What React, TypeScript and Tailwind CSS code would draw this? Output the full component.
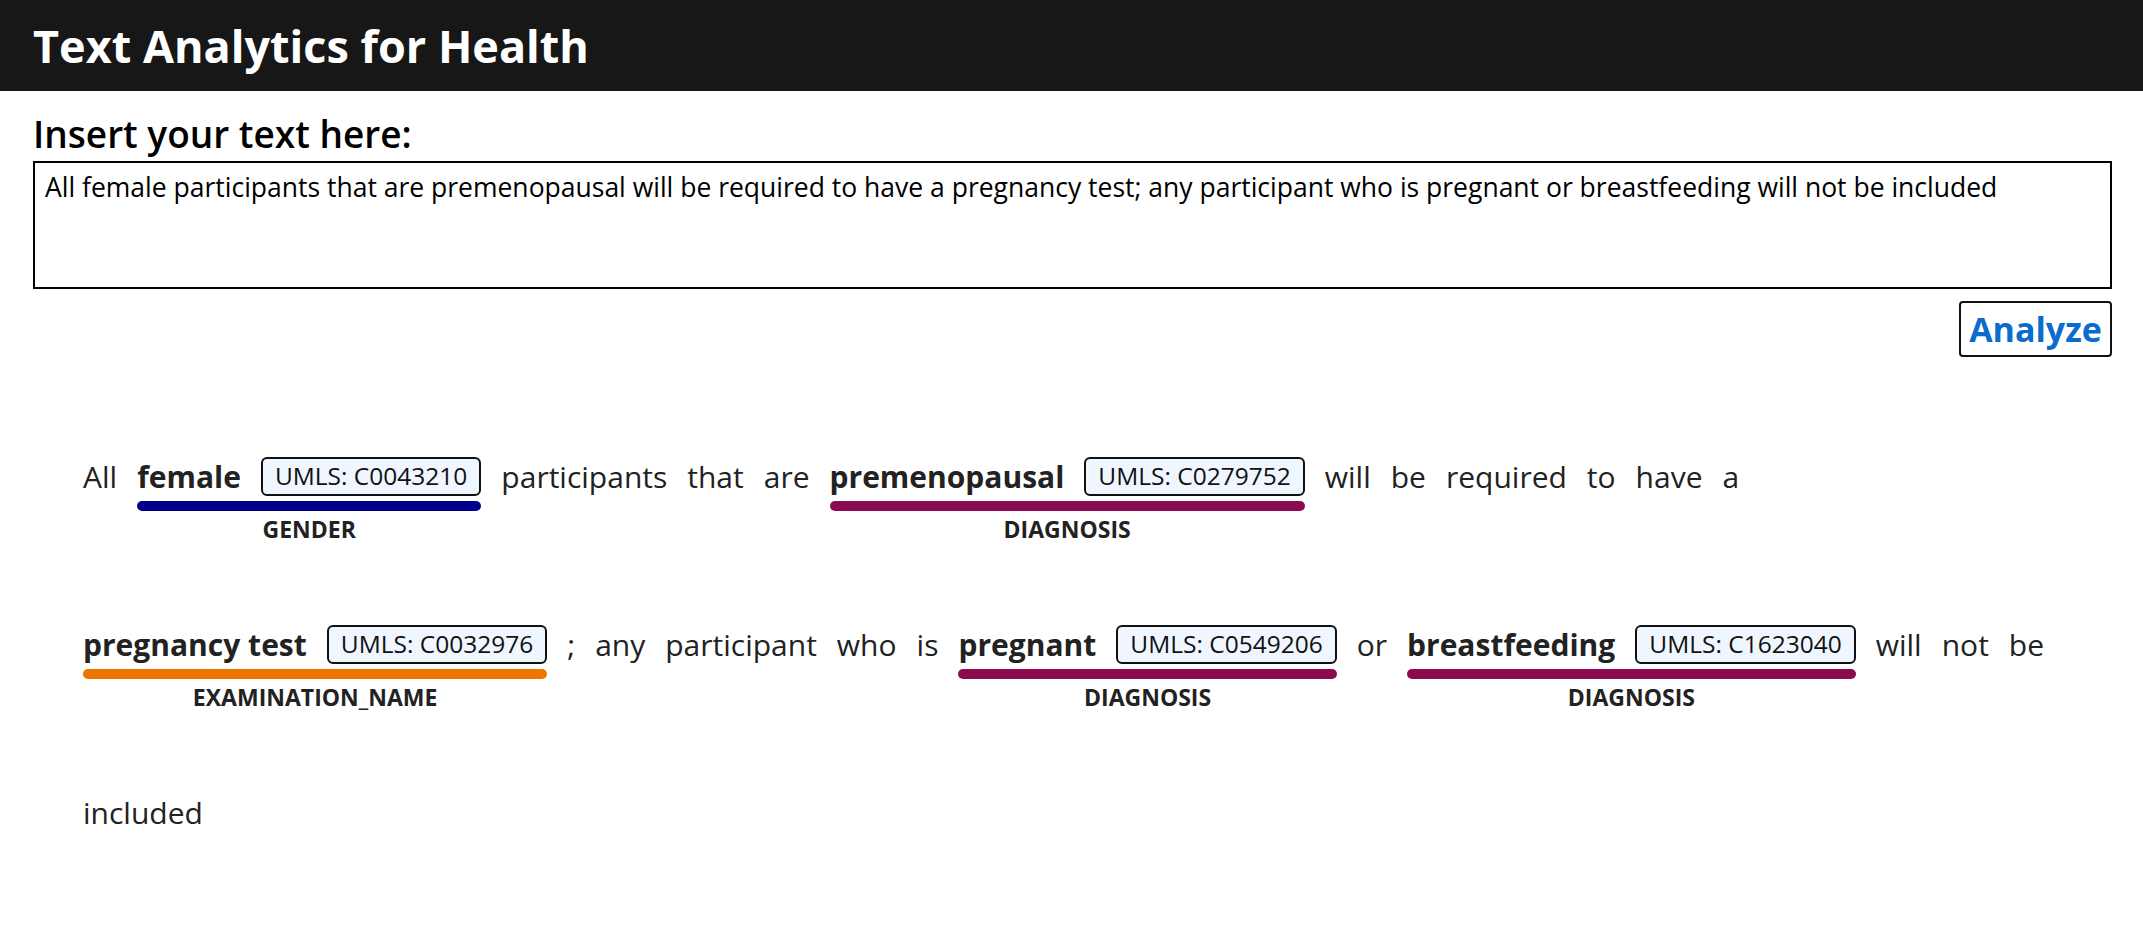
import React from "react";

type Tok =
  | { t: "w"; text: string }
  | { t: "e"; text: string; code: string; label: string; color: string };

const GENDER = "bg-[#00008b]";
const DIAG = "bg-[#8b0a50]";
const EXAM = "bg-[#ee7600]";

const tokens: Tok[] = [
  { t: "w", text: "All" },
  { t: "e", text: "female", code: "UMLS: C0043210", label: "GENDER", color: GENDER },
  { t: "w", text: "participants" },
  { t: "w", text: "that" },
  { t: "w", text: "are" },
  { t: "e", text: "premenopausal", code: "UMLS: C0279752", label: "DIAGNOSIS", color: DIAG },
  { t: "w", text: "will" },
  { t: "w", text: "be" },
  { t: "w", text: "required" },
  { t: "w", text: "to" },
  { t: "w", text: "have" },
  { t: "w", text: "a" },
  { t: "e", text: "pregnancy test", code: "UMLS: C0032976", label: "EXAMINATION_NAME", color: EXAM },
  { t: "w", text: ";" },
  { t: "w", text: "any" },
  { t: "w", text: "participant" },
  { t: "w", text: "who" },
  { t: "w", text: "is" },
  { t: "e", text: "pregnant", code: "UMLS: C0549206", label: "DIAGNOSIS", color: DIAG },
  { t: "w", text: "or" },
  { t: "e", text: "breastfeeding", code: "UMLS: C1623040", label: "DIAGNOSIS", color: DIAG },
  { t: "w", text: "will" },
  { t: "w", text: "not" },
  { t: "w", text: "be" },
  { t: "w", text: "included" },
];

const TEXT =
  "All female participants that are premenopausal will be required to have a pregnancy test; any participant who is pregnant or breastfeeding will not be included";

function Entity({ tok }: { tok: Extract<Tok, { t: "e" }> }) {
  return (
    <div className="flex flex-col">
      <div className="flex h-[39px] items-center gap-[20px]">
        <span className="text-[30px] font-bold leading-none text-[#222]">{tok.text}</span>
        <span className="flex h-[39px] items-center rounded-[6px] border-2 border-[#111] bg-[#eff6ff] px-[12px] text-[24.5px] leading-none text-[#111]">
          {tok.code}
        </span>
      </div>
      <div className={`mt-[5px] h-[10px] w-full rounded-full ${tok.color}`} />
      <div className="mt-[4px] text-center text-[23px] font-bold leading-[28px] text-[#222]">
        {tok.label}
      </div>
    </div>
  );
}

export default function App() {
  return (
    <div className="min-h-screen bg-white font-['Open_Sans',sans-serif] text-black">
      <header className="flex h-[91px] items-center bg-[#171717] px-[33px]">
        <h1 className="text-[45px] font-bold leading-none text-white">Text Analytics for Health</h1>
      </header>
      <main className="px-[31px] pl-[33px]">
        <h2 className="mt-[18px] text-[37px] font-semibold leading-[50px] text-black">Insert your text here:</h2>
        <textarea
          className="mt-[2px] block h-[128px] w-full resize-none border-2 border-black px-[10px] py-[6px] text-[26.5px] leading-[36px] text-black outline-none"
          defaultValue={TEXT}
          readOnly
        />
        <div className="mt-[12px] flex justify-end">
          <button className="flex h-[56px] w-[153px] items-center justify-center rounded-[4px] border-2 border-[#111] bg-white text-[34px] font-bold leading-none text-[#0b6cce]">
            Analyze
          </button>
        </div>
        <div className="mt-[100px] flex flex-wrap items-start gap-x-[20px] gap-y-[82px] pl-[50px] pr-[50px]">
          {tokens.map((tok, i) =>
            tok.t === "w" ? (
              <span key={i} className="flex h-[39px] items-center text-[30px] leading-none text-[#222]">
                {tok.text}
              </span>
            ) : (
              <Entity key={i} tok={tok} />
            )
          )}
        </div>
      </main>
    </div>
  );
}
